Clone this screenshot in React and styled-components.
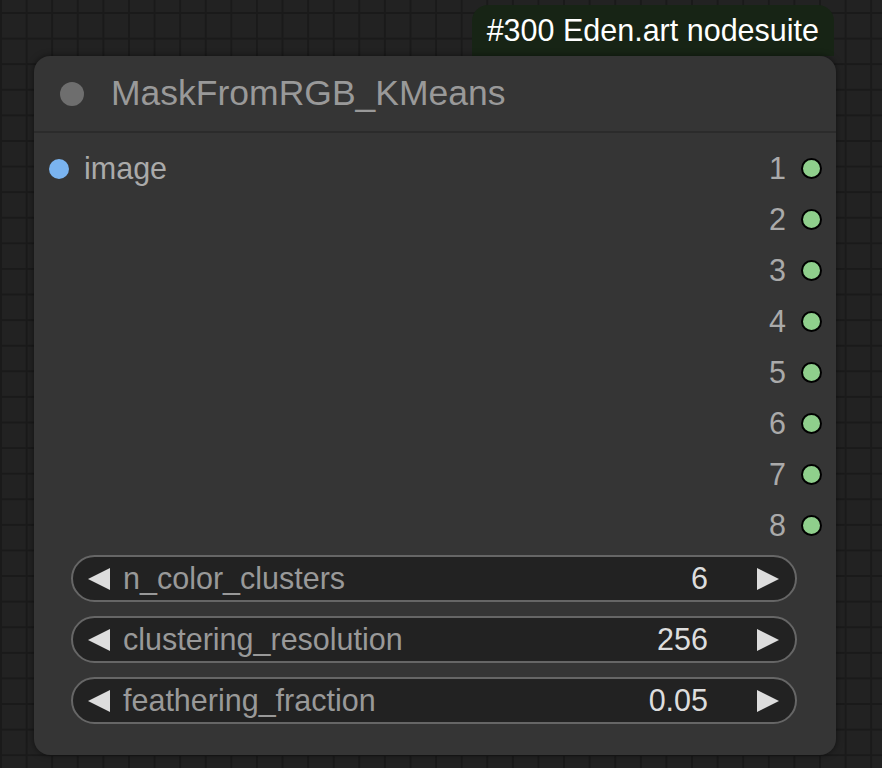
import styled, { createGlobalStyle } from "styled-components";

const GlobalStyle = createGlobalStyle`
  html, body {
    margin: 0;
    padding: 0;
    background: #222;
  }
  body {
    font-family: "Liberation Sans", Arial, sans-serif;
  }
`;

const outputs = ["1", "2", "3", "4", "5", "6", "7", "8"];

const widgets = [
  { name: "n_color_clusters", value: "6" },
  { name: "clustering_resolution", value: "256" },
  { name: "feathering_fraction", value: "0.05" },
];

const Triangle = ({ dir }) => (
  <ArrowSvg viewBox="0 0 22 22">
    {dir === "left" ? (
      <polygon points="0,11 22,0 22,22" fill="#ddd" />
    ) : (
      <polygon points="22,11 0,0 0,22" fill="#ddd" />
    )}
  </ArrowSvg>
);

export default function App() {
  return (
    <>
      <GlobalStyle />
      <Canvas>
        <NodeWrap>
          <Badge>#300 Eden.art nodesuite</Badge>
          <Node>
            <TitleBar>
              <TitleDot />
              <Title>MaskFromRGB_KMeans</Title>
            </TitleBar>
            <Body>
              <Slots>
                <InputCol>
                  <Slot>
                    <Dot color="#7ab4f0" />
                    <SlotLabel>image</SlotLabel>
                  </Slot>
                </InputCol>
                <OutputCol>
                  {outputs.map((o) => (
                    <Slot key={o}>
                      <SlotLabel>{o}</SlotLabel>
                      <Dot color="#8fcf8c" outlined />
                    </Slot>
                  ))}
                </OutputCol>
              </Slots>
              <Widgets>
                {widgets.map((w) => (
                  <Widget key={w.name}>
                    <Triangle dir="left" />
                    <WidgetName>{w.name}</WidgetName>
                    <WidgetValue>{w.value}</WidgetValue>
                    <Triangle dir="right" />
                  </Widget>
                ))}
              </Widgets>
            </Body>
          </Node>
        </NodeWrap>
      </Canvas>
    </>
  );
}

const Canvas = styled.div`
  width: 882px;
  height: 768px;
  overflow: hidden;
  background-color: #222;
  background-image:
    linear-gradient(to right, #1a1a1a 2px, transparent 2px),
    linear-gradient(to bottom, #1a1a1a 2px, transparent 2px);
  background-size: 25.6px 25.6px;
  background-position: 0px 12px;
  padding: 5px 46px 0 34px;
  box-sizing: border-box;
`;

const NodeWrap = styled.div`
  display: flex;
  flex-direction: column;
  align-items: flex-end;
  width: 802px;
`;

const Badge = styled.div`
  height: 51px;
  box-sizing: border-box;
  margin-right: 2px;
  padding: 0 15px;
  display: flex;
  align-items: center;
  background: #172415;
  color: #fff;
  font-size: 30.5px;
  border-radius: 16px 16px 0 0;
`;

const Node = styled.div`
  width: 802px;
  height: 699px;
  background: #353535;
  border-radius: 16px;
  box-shadow: 0 0 6px rgba(0, 0, 0, 0.5);
  display: flex;
  flex-direction: column;
`;

const TitleBar = styled.div`
  height: 75px;
  display: flex;
  align-items: center;
  padding-left: 26px;
  gap: 27px;
  border-bottom: 2px solid #2b2b2b;
`;

const TitleDot = styled.div`
  width: 24px;
  height: 24px;
  border-radius: 50%;
  background: #6e6e6e;
`;

const Title = styled.div`
  color: #999;
  font-size: 35.5px;
`;

const Body = styled.div`
  flex: 1;
  display: flex;
  flex-direction: column;
  padding: 10px 0 0;
`;

const Slots = styled.div`
  display: flex;
  justify-content: space-between;
`;

const InputCol = styled.div`
  display: flex;
  flex-direction: column;
  padding-left: 15px;
`;

const OutputCol = styled.div`
  display: flex;
  flex-direction: column;
  align-items: flex-end;
  padding-right: 14px;
`;

const Slot = styled.div`
  height: 51px;
  display: flex;
  align-items: center;
  gap: 15px;
`;

const Dot = styled.div`
  width: ${(p) => (p.outlined ? "17px" : "20px")};
  height: ${(p) => (p.outlined ? "17px" : "20px")};
  border-radius: 50%;
  background: ${(p) => p.color};
  border: ${(p) => (p.outlined ? "2px solid #000" : "none")};
`;

const SlotLabel = styled.div`
  color: #aaa;
  font-size: 30.5px;
`;

const Widgets = styled.div`
  display: flex;
  flex-direction: column;
  gap: 14px;
  padding: 4px 39px 0 37px;
`;

const Widget = styled.div`
  height: 47px;
  box-sizing: border-box;
  border: 2px solid #666;
  border-radius: 24px;
  background: #222;
  display: flex;
  align-items: center;
  padding: 0 16px 0 15px;
`;

const ArrowSvg = styled.svg`
  width: 22px;
  height: 22px;
  flex: none;
`;

const WidgetName = styled.div`
  flex: 1;
  color: #999;
  font-size: 30.5px;
  margin-left: 13px;
`;

const WidgetValue = styled.div`
  color: #ddd;
  font-size: 30.5px;
  margin-right: 49px;
`;
